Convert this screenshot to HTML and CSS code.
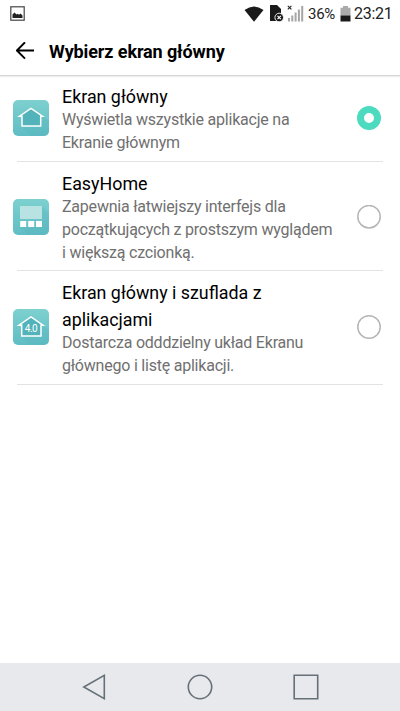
FILE: index.html
```html
<!DOCTYPE html>
<html lang="pl">
<head>
<meta charset="utf-8">
<title>Wybierz ekran główny</title>
<link rel="stylesheet" href="styles.css">
</head>
<body>
<div class="status">
  <svg class="picture" width="15" height="15" viewBox="0 0 15 15"><rect x=".8" y=".8" width="13.4" height="13.4" fill="#fff" stroke="#444" stroke-width="1.2"/><path d="M2.500 12V8.500L4.500 6.500l2 2 1.200-.7L9 8.800 10.500 7.500l2 2V12z" fill="#222"/></svg>
  <svg width="20" height="16" viewBox="0 0 20 16"><path d="M.5 4Q10-3 19.500 4L10 15.800z" fill="#1a1a1a"/></svg>
  <svg class="sim" width="14" height="17" viewBox="0 0 14 17"><path d="M0 0h7l4 4v12H0z" fill="#1a1a1a"/><circle cx="9.200" cy="12.500" r="4.300" fill="#1a1a1a" stroke="#fff" stroke-width=".9"/><path d="M7.500 10.800l3.400 3.400M10.900 10.800l-3.400 3.400" stroke="#fff" stroke-width="1.200"/></svg>
  <svg class="signal" width="17" height="17" viewBox="0 0 17 17"><path d="M.8.8l3.600 3.600M4.400.8L.8 4.400" stroke="#222" stroke-width="1.100"/><path d="M1 13h2v3.500H1zM4.300 10.500h2v6h-2zM7.600 7.500h2v9h-2zM10.900 4.500h2v12h-2zM14.200 1h2v15.500h-2z" fill="#a5a5a5"/></svg>
  <span class="percent">36%</span>
  <svg class="battery" width="11" height="16" viewBox="0 0 11 16"><path d="M3 0h5v1.700h2.500v8H.5v-8H3z" fill="#aaa"/><path d="M.5 9.500h10v6H.5z" fill="#1a1a1a"/></svg>
  <span class="clock">23:21</span>
</div>
<header class="bar">
  <svg width="18" height="18" viewBox="0 0 18 18"><path d="M18 8.500H1M9 .3L.9 8.500 9 16.700" fill="none" stroke="#000" stroke-width="1.900"/></svg>
  <h1>Wybierz ekran główny</h1>
</header>
<svg class="defs" width="0" height="0"><defs>
  <linearGradient id="tile" x1="0" y1="0" x2="0" y2="1"><stop offset="0" stop-color="#7dd0cf"/><stop offset="1" stop-color="#5fbdc4"/></linearGradient>
</defs></svg>
<main>
  <section class="row first">
    <svg class="icon" viewBox="0 0 36 36"><rect width="36" height="36" rx="5" fill="url(#tile)"/><path d="M8 26L18 36H31q5 0 5-5V21L28 15z" fill="#56b4bc" opacity=".3"/><path d="M9 26.100V16.200H6.500L18 8.300l11.500 7.900H27.700V26.100z" fill="#53b3ba" stroke="#fff" stroke-width="1.500"/></svg>
    <div class="text"><h2>Ekran główny</h2><p>Wyświetla wszystkie aplikacje na<br>Ekranie głównym</p></div>
    <span class="radio checked"></span>
  </section>
  <section class="row">
    <svg class="icon" viewBox="0 0 36 36"><rect width="36" height="36" rx="5" fill="url(#tile)"/><path d="M7 28l8 8H31q5 0 5-5V14.500L29 7.500V28z" fill="#56b4bc" opacity=".3"/><path d="M7 7h22v13H7z" fill="#b8e3e2"/><path d="M7.200 22h6v6h-6zM15.200 22h6v6h-6zM23 22h6v6h-6z" fill="#fff"/></svg>
    <div class="text"><h2>EasyHome</h2><p>Zapewnia łatwiejszy interfejs dla<br>początkujących z prostszym wyglądem<br>i większą czcionką.</p></div>
    <svg class="ring" viewBox="0 0 24 24"><circle cx="12" cy="11.700" r="11.200"/></svg>
  </section>
  <section class="row last">
    <svg class="icon" viewBox="0 0 36 36"><rect width="36" height="36" rx="5" fill="url(#tile)"/><path d="M8 27l9 9H31q5 0 5-5V21L28 15z" fill="#56b4bc" opacity=".3"/><path d="M8.700 26.900V16.200H6L18 8l12 8.200H28V26.900z" fill="#53b3ba" stroke="#fff" stroke-width="1.500"/><text x="18" y="23.200" class="version">4.0</text></svg>
    <div class="text"><h2>Ekran główny i szuflada z<br>aplikacjami</h2><p>Dostarcza odddzielny układ Ekranu<br>głównego i listę aplikacji.</p></div>
    <svg class="ring" viewBox="0 0 24 24"><circle cx="12" cy="12" r="11.200"/></svg>
  </section>
</main>
<nav class="nav">
  <svg viewBox="0 0 28 28"><path d="M24.300 2.300v23.400L3.800 14z"/></svg>
  <svg viewBox="0 0 28 28"><circle cx="14" cy="14" r="11.700"/></svg>
  <svg viewBox="0 0 28 28"><path d="M2.200 2.300h23.500v23.400H2.200z"/></svg>
</nav>
</body>
</html>
```
FILE: styles.css
```css
* { box-sizing: border-box; }
body {
  margin: 0;
  height: 711px;
  overflow: hidden;
  display: flex;
  flex-direction: column;
  background: #fff;
  color: #000;
  font-family: Roboto, "Noto Sans", sans-serif;
}
svg { flex: none; display: block; }
.defs { position: absolute; }
.status {
  height: 27px;
  flex: none;
  display: flex;
  align-items: center;
  padding: 0 7px 0 10px;
  color: #222;
}
.picture { margin-right: auto; }
.sim { margin-left: 6px; }
.signal { margin-left: 3px; }
.percent { width: 28px; margin-left: 4px; font-size: 15px; letter-spacing: -.3px; }
.battery { margin-left: 4px; }
.clock { width: 39px; margin-left: 3px; font-size: 16px; letter-spacing: -.3px; }
.bar {
  height: 49px;
  flex: none;
  display: flex;
  align-items: center;
  padding-left: 16px;
  gap: 15px;
  border-bottom: 1px solid #d8d8d8;
  box-shadow: 0 1px 1px #eee;
}
h1 { margin: 0; font-size: 18px; letter-spacing: -.11px; font-weight: 700; white-space: nowrap; }
main { flex: 1; }
.row {
  display: flex;
  align-items: center;
  padding: 8px 19px 7px 13px;
  border-bottom: 1px solid transparent;
  background: linear-gradient(#e3e3e3, #e3e3e3) 17px 100% / 366px 1px no-repeat border-box;
}
.row.first, .row.last { padding: 7px 19px 8px 13px; }
.icon { width: 36px; height: 36px; }
.text { flex: 1; margin-left: 13px; white-space: nowrap; }
h2 { margin: 0 0 -3px; font-size: 17.85px; font-weight: 400; line-height: 27px; }
p { margin: 0 0 -1px; padding-top: 1px; font-size: 16px; letter-spacing: -.22px; line-height: 23px; color: #707070; }
.last .text { padding-top: 1px; }
.version { font: 10px Roboto, sans-serif; fill: #fff; text-anchor: middle; letter-spacing: -.4px; }
.radio { width: 24px; height: 24px; border-radius: 50%; }
.ring { width: 24px; height: 24px; fill: none; stroke: #b5b5b5; stroke-width: 1.5; }
.checked { border: 7px solid #4ddbc0; }
.nav {
  height: 48px;
  flex: none;
  background: #e8e9ed;
  display: flex;
  align-items: center;
  justify-content: center;
  gap: 78px;
  padding-right: 1px;
}
.nav svg { width: 28px; height: 28px; fill: none; stroke: #657078; stroke-width: 1.6; }
```
